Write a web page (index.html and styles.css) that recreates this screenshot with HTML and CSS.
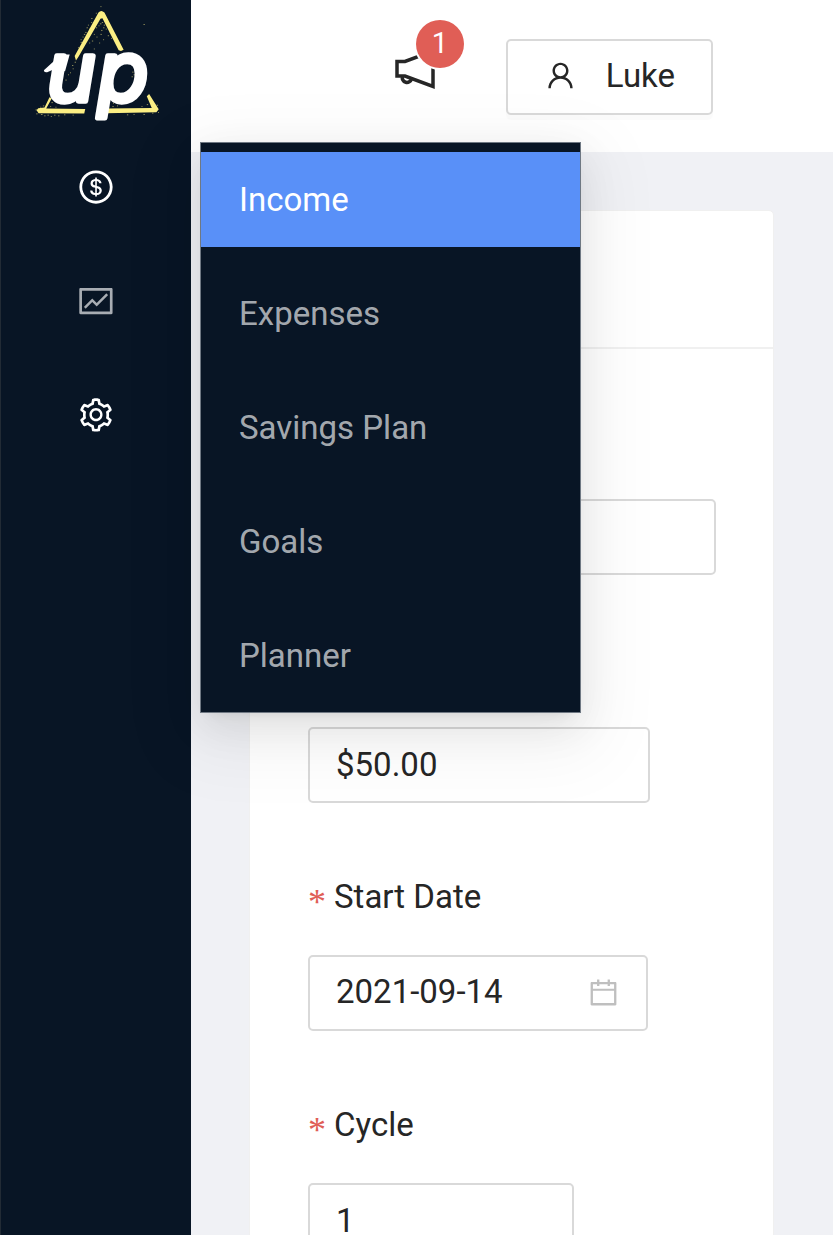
FILE: index.html
```html
<!DOCTYPE html>
<html lang="en">
<head>
<meta charset="utf-8">
<meta name="viewport" content="width=device-width, initial-scale=1">
<title>Income</title>
<link rel="stylesheet" href="styles.css">
</head>
<body>
<div class="shell">
  <aside class="sidebar">
    <a class="logo" href="#" aria-label="Up home">
      <svg viewBox="0 0 573 420" aria-hidden="true">
        <g fill="#fbee83">
          <path d="M294 38q8-10 18 0l58 112-8 4-7-2-49-97-6 2-66 114-8 12-4-14z"/>
          <path d="M146 294l7 3-17 31 118 1-3 14-138-1-6-9 5-6 19-2z"/>
          <path d="M447 284l29 46-7 9-153 3 4-14 135-2-15-35z"/>
        </g>
        <path class="spray" d="M300 20h3M272 56h4M262 76h3M254 98h4M246 112h3M240 128h4M232 144h3M266 88h4M250 104h4M272 68h3M286 40h3M258 84h4M240 120h3M286 84h4M294 78h3M302 92h4M310 76h4M316 88h3M300 104h4M288 112h3M308 120h3M322 108h4M328 98h3M318 72h4M326 84h3M280 104h3M274 124h4M296 130h3M266 130h3M280 148h3M312 64h5M304 68h4M298 72h5M322 78h4M308 84h4M332 116h3M430 74h4M222 188h4M214 198h4M216 208h3M208 220h3M202 226h3M194 242h4M396 218h4M400 226h5M394 232h4M402 238h3M104 332h4M106 344h4M120 346h5M130 350h4M140 348h4M150 352h3M126 320h4M118 324h3M160 348h4M172 350h4M152 310h4M148 322h3M164 324h3M190 347h4M216 348h3M336 322h4M350 320h3M338 312h3M424 322h3M440 316h4M456 342h4M470 318h4M474 340h3M380 347h4M400 346h3M430 346h4"/>
        <path d="M129 212l44-40q10-8 34-7l-14 50-30-7-24 10q-10 2-10-6z" fill="#fff"/>
        <text class="wordmark" x="138 292" y="304">up</text>
      </svg>
    </a>
    <nav class="side-nav" aria-label="Main">
      <button class="side-link" aria-label="Money" aria-expanded="true">
        <svg class="side-icon" viewBox="0 0 1024 1024"><path d="M512 64C264.6 64 64 264.6 64 512s200.6 448 448 448 448-200.6 448-448S759.4 64 512 64zm0 820c-205.4 0-372-166.6-372-372s166.6-372 372-372 372 166.6 372 372-166.6 372-372 372zm47.7-395.2l-25.4-5.9V348.6c38 5.2 61.5 29 65.5 58.2.5 4 3.9 6.9 7.9 6.9h44.9c4.7 0 8.4-4.1 8-8.8-6.1-62.3-57.4-102.3-125.9-109.2V263c0-4.4-3.6-8-8-8h-28.1c-4.4 0-8 3.6-8 8v33c-70.8 6.9-126.2 46-126.2 119 0 67.6 49.8 100.2 102.1 112.7l24.7 6.3v142.7c-44.2-5.9-69-29.5-74.1-61.3-.6-3.8-4-6.6-7.9-6.6H363c-4.7 0-8.4 4-8 8.7 4.5 55 46.2 105.6 135.2 112.1V761c0 4.4 3.6 8 8 8h28.4c4.4 0 8-3.6 8-8.1l-.2-31.7c78.3-6.9 134.3-48.8 134.3-124-.1-69.4-44.2-100.4-109-116.4zm-68.6-16.2c-5.6-1.6-10.3-3.1-15-5-33.8-12.2-49.5-31.9-49.5-57.3 0-36.3 27.5-57 64.5-61.7v124zM534.3 677V543.3c3.1.9 5.9 1.6 8.8 2.2 47.3 14.4 63.2 34.4 63.2 65.1 0 39.1-29.4 62.6-72 66.4z"/></svg>
      </button>
      <button class="side-link side-link-muted" aria-label="Reports">
        <svg class="side-icon" viewBox="0 0 1024 1024"><path d="M926 164H94c-17.700 0-32 14.300-32 32v640c0 17.700 14.300 32 32 32h832c17.700 0 32-14.300 32-32V196c0-17.700-14.300-32-32-32zm-40 632H134V236h752v560zm-658.900-82.300c3.100 3.100 8.200 3.100 11.300 0l172.500-172.500 114.400 114.500c3.100 3.100 8.200 3.100 11.300 0l297-297.200c3.100-3.100 3.100-8.200 0-11.300l-36.800-36.800a8.030 8.030 0 00-11.300 0L531 565 416.600 450.500a8.030 8.030 0 00-11.300 0l-214.900 215a8.030 8.030 0 000 11.300l36.700 36.900z"/></svg>
      </button>
      <button class="side-link" aria-label="Settings">
        <svg class="side-icon" viewBox="0 0 1024 1024"><path d="M924.8 625.7l-65.5-56c3.1-19 4.7-38.4 4.7-57.8s-1.6-38.8-4.7-57.8l65.5-56a32.03 32.03 0 009.3-35.2l-.9-2.6a443.74 443.74 0 00-79.7-137.9l-1.8-2.1a32.12 32.12 0 00-35.1-9.5l-81.3 28.9c-30-24.6-63.5-44-99.7-57.6l-15.7-85a32.05 32.05 0 00-25.8-25.7l-2.7-.5c-52.1-9.4-106.9-9.4-159 0l-2.7.5a32.05 32.05 0 00-25.8 25.7l-15.8 85.4a351.86 351.86 0 00-99 57.4l-81.9-29.1a32 32 0 00-35.1 9.5l-1.8 2.1a446.02 446.02 0 00-79.7 137.9l-.9 2.6c-4.5 12.5-.8 26.5 9.3 35.2l66.3 56.6c-3.1 18.8-4.6 38-4.6 57.1 0 19.2 1.5 38.4 4.6 57.1L99 625.5a32.03 32.03 0 00-9.3 35.2l.9 2.6c18.1 50.4 44.9 96.9 79.7 137.9l1.8 2.1a32.12 32.12 0 0035.1 9.5l81.9-29.1c29.8 24.5 63.1 43.9 99 57.4l15.8 85.4a32.05 32.05 0 0025.8 25.7l2.7.5a449.4 449.4 0 00159 0l2.7-.5a32.05 32.05 0 0025.8-25.7l15.7-85a350 350 0 0099.7-57.6l81.3 28.9a32 32 0 0035.1-9.5l1.8-2.1c34.8-41.1 61.6-87.5 79.7-137.9l.9-2.6c4.5-12.3.8-26.3-9.3-35zM788.3 465.9c2.5 15.1 3.8 30.6 3.8 46.1s-1.3 31-3.8 46.1l-6.6 40.1 74.7 63.9a370.03 370.03 0 01-42.6 73.6L721 702.8l-31.4 25.8c-23.9 19.6-50.5 35-79.3 45.8l-38.1 14.3-17.9 97a377.5 377.5 0 01-85 0l-17.9-97.2-37.8-14.5c-28.5-10.8-55-26.2-78.7-45.7l-31.4-25.9-93.4 33.2c-17-22.9-31.2-47.6-42.6-73.6l75.5-64.5-6.5-40c-2.4-14.9-3.7-30.3-3.7-45.5 0-15.3 1.2-30.6 3.7-45.5l6.5-40-75.5-64.5c11.3-26.1 25.6-50.7 42.6-73.6l93.4 33.2 31.4-25.9c23.7-19.5 50.2-34.9 78.7-45.7l37.9-14.3 17.9-97.2c28.1-3.2 56.8-3.2 85 0l17.9 97 38.1 14.3c28.7 10.8 55.4 26.2 79.3 45.8l31.4 25.8 92.8-32.9c17 22.9 31.2 47.6 42.6 73.6L781.8 426l6.5 39.9zM512 326c-97.2 0-176 78.8-176 176s78.8 176 176 176 176-78.8 176-176-78.8-176-176-176zm79.2 255.2A111.6 111.6 0 01512 614c-29.9 0-58-11.7-79.2-32.8A111.6 111.6 0 01400 502c0-29.9 11.7-58 32.8-79.2C454 401.6 482.1 390 512 390c29.9 0 58 11.6 79.2 32.8A111.6 111.6 0 01624 502c0 29.9-11.7 58-32.8 79.2z"/></svg>
      </button>
    </nav>
    <nav class="submenu" aria-label="Money">
      <a class="submenu-item submenu-item-active" href="#" aria-current="page">Income</a>
      <a class="submenu-item" href="#">Expenses</a>
      <a class="submenu-item" href="#">Savings Plan</a>
      <a class="submenu-item" href="#">Goals</a>
      <a class="submenu-item" href="#">Planner</a>
    </nav>
  </aside>
  <div class="main">
    <header class="topbar">
      <button class="news" aria-label="Announcements">
        <svg class="news-icon" viewBox="0 0 40 40" fill="none" stroke="#262626" stroke-width="3.500"><path d="M2 10.500H10L38 0V35.500L10 25H2z"/><path d="M7.500 25.500a4.600 4.600 0 1 0 9 2.500"/></svg>
        <span class="badge">1</span>
      </button>
      <button class="user">
        <svg class="icon" viewBox="0 0 1024 1024" aria-hidden="true"><path d="M858.5 763.6a374 374 0 00-80.6-119.5 375.63 375.63 0 00-119.5-80.6c-.4-.2-.8-.3-1.2-.5C719.5 518 760 444.7 760 362c0-137-111-248-248-248S264 225 264 362c0 82.7 40.5 156 102.8 201.1-.4.2-.8.3-1.2.5-44.8 18.9-85 46-119.5 80.6a375.63 375.63 0 00-80.6 119.5A371.7 371.7 0 00136 901.8a8 8 0 008 8.2h60c4.4 0 7.9-3.5 8-7.8 2-77.2 33-149.5 87.8-204.3 56.7-56.7 132-87.9 212.2-87.9s155.5 31.2 212.2 87.9C779 752.7 810 825 812 902.2c.1 4.4 3.6 7.8 8 7.8h60a8 8 0 008-8.2c-1-47.8-10.9-94.3-29.5-138.2zM512 534c-45.9 0-89.1-17.9-121.6-50.4S340 407.9 340 362c0-45.9 17.9-89.1 50.4-121.6S466.1 190 512 190s89.1 17.9 121.6 50.4S684 316.1 684 362c0 45.9-17.9 89.1-50.4 121.6S557.9 534 512 534z"/></svg>
        <span>Luke</span>
      </button>
    </header>
    <main class="content">
      <section class="card">
        <div class="card-head"></div>
        <form class="card-body">
          <div class="field">
            <div class="field-label"></div>
            <input class="control" type="text" aria-label="Name">
          </div>
          <div class="field">
            <div class="field-label"></div>
            <input class="control control-amount" type="text" aria-label="Amount" value="$50.00">
          </div>
          <div class="field">
            <label class="field-label" for="start-date"><span class="required">*</span>Start Date</label>
            <div class="control control-date">
              <input class="date-input" id="start-date" type="text" value="2021-09-14">
              <svg class="icon date-icon" viewBox="0 0 1024 1024" aria-hidden="true"><path d="M880 184H712v-64c0-4.400-3.600-8-8-8h-56c-4.400 0-8 3.600-8 8v64H384v-64c0-4.400-3.600-8-8-8h-56c-4.400 0-8 3.600-8 8v64H144c-17.700 0-32 14.300-32 32v664c0 17.700 14.300 32 32 32h736c17.700 0 32-14.300 32-32V216c0-17.700-14.300-32-32-32zm-40 656H184V460h656v380zM184 392V256h128v48c0 4.400 3.600 8 8 8h56c4.400 0 8-3.600 8-8v-48h256v48c0 4.400 3.600 8 8 8h56c4.400 0 8-3.600 8-8v-48h128v136H184z"/></svg>
            </div>
          </div>
          <div class="field">
            <label class="field-label" for="cycle"><span class="required">*</span>Cycle</label>
            <input class="control control-cycle" id="cycle" type="text" value="1">
          </div>
        </form>
      </section>
    </main>
  </div>
</div>
</body>
</html>
```
FILE: styles.css
```css
* { box-sizing: border-box; }

body {
  margin: 0;
  font-family: Roboto, "Liberation Sans", sans-serif;
  font-size: 33px;
  color: #262626;
}

button, input { font: inherit; color: inherit; }
button { cursor: pointer; }

.shell {
  display: flex;
  height: 100vh;
  overflow: hidden;
  background: #f0f1f5;
}

.sidebar {
  position: relative;
  z-index: 2;
  flex: 0 0 191px;
  background: #081525;
  border-left: 1px solid #222b35;
}

.logo, .logo svg { display: block; }
.logo svg { width: 100%; height: 139px; }

.spray {
  stroke: #fbee83;
  stroke-width: 3;
  opacity: 0.55;
}

.wordmark {
  font-family: Inter, sans-serif;
  font-size: 250px;
  font-weight: 400;
  font-style: italic;
  fill: #fff;
  stroke: #fff;
  stroke-width: 16;
  stroke-linejoin: round;
}

.side-nav {
  display: flex;
  flex-direction: column;
  gap: 19px;
}

.side-link {
  display: flex;
  align-items: center;
  justify-content: center;
  height: 95px;
  padding: 0;
  border: 0;
  background: none;
  color: #fff;
}

.side-link-muted { color: rgba(255, 255, 255, 0.65); }

.side-icon {
  width: 38px;
  height: 38px;
  fill: currentColor;
}

.submenu {
  position: absolute;
  top: 142px;
  left: 199px;
  display: flex;
  flex-direction: column;
  gap: 19px;
  width: 381px;
  padding: 9px 0;
  border: 1px solid #6f7883;
  background: #081525;
  box-shadow:
    0 7px 14px -10px rgba(0, 0, 0, 0.12),
    0 14px 38px rgba(0, 0, 0, 0.08),
    0 21px 67px 19px rgba(0, 0, 0, 0.05);
}

.submenu-item {
  padding: 0 38px;
  line-height: 95px;
  color: rgba(255, 255, 255, 0.65);
  text-decoration: none;
}

.submenu-item-active {
  background: #5990f8;
  color: #fff;
}

.main {
  flex: 1;
  min-width: 0;
  display: flex;
  flex-direction: column;
}

.topbar {
  flex: 0 0 152px;
  display: flex;
  align-items: flex-start;
  justify-content: flex-end;
  gap: 71px;
  padding: 39px 120px 0 0;
  background: #fff;
}

.news {
  position: relative;
  padding: 12px 0 0;
  border: 0;
  background: none;
}

.news-icon {
  display: block;
  width: 40px;
  height: 40px;
}

.badge {
  position: absolute;
  top: -19px;
  left: 21px;
  min-width: 48px;
  height: 48px;
  border-radius: 24px;
  background: #e05e56;
  box-shadow: 0 0 0 2px #fff;
  color: #fff;
  font-size: 29px;
  line-height: 46px;
  text-align: center;
}

.user {
  display: flex;
  align-items: center;
  gap: 29px;
  height: 76px;
  padding: 0 36px 4px;
  border: 2px solid #d9d9d9;
  border-radius: 5px;
  background: #fff;
  box-shadow: 0 5px 0 rgba(0, 0, 0, 0.016);
}

.icon {
  flex: none;
  width: 33px;
  height: 33px;
  fill: currentColor;
}

.content { padding: 58px 59px 58px 58px; }

.card {
  border: 1px solid #f0f0f0;
  border-radius: 5px;
  background: #fff;
}

.card-head {
  height: 138px;
  border-bottom: 2px solid #f0f0f0;
}

.card-body {
  display: flex;
  flex-direction: column;
  gap: 57px;
  padding: 55px 57px 55px 58px;
}

.field {
  display: flex;
  flex-direction: column;
  align-items: flex-start;
  gap: 19px;
}

.field-label {
  display: flex;
  align-items: center;
  gap: 8px;
  height: 76px;
  padding-bottom: 4px;
}

.required {
  padding-top: 12px;
  color: #e05e56;
  font-family: "Liberation Serif", serif;
  font-size: 36px;
  line-height: 33px;
}

.control {
  width: 100%;
  height: 76px;
  padding: 0 26px 2px;
  border: 2px solid #d9d9d9;
  border-radius: 5px;
  background: #fff;
}

.control-amount { max-width: 342px; }
.control-cycle { max-width: 266px; }

.control-date {
  display: flex;
  align-items: center;
  max-width: 340px;
}

.date-input {
  flex: 1;
  min-width: 0;
  padding: 0 0 2px;
  border: 0;
  background: none;
  outline: 0;
}

.date-icon { color: #bfbfbf; }
```
